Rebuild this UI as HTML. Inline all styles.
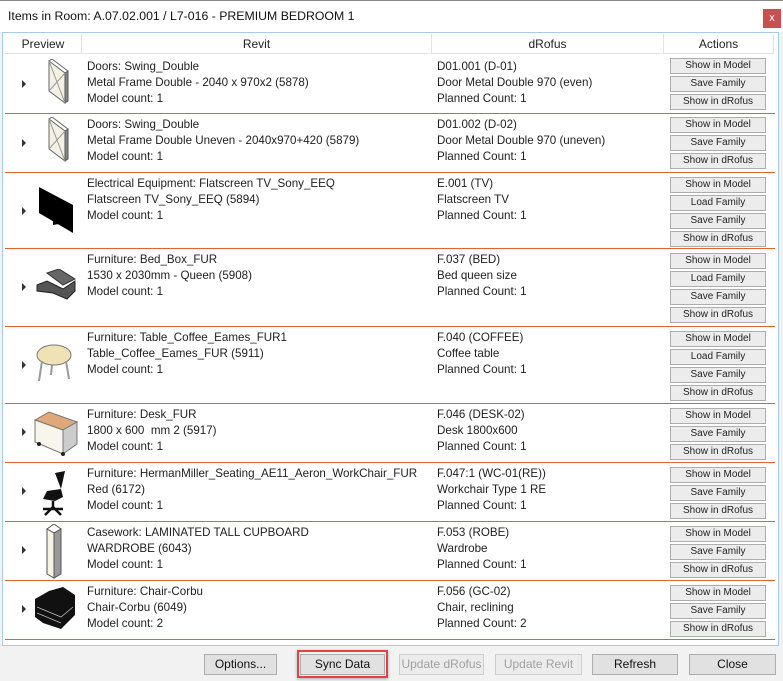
<!DOCTYPE html><html><head><meta charset="utf-8"><style>
*{margin:0;padding:0;box-sizing:border-box}
body{width:783px;height:681px;background:#f2f2f2;font-family:"Liberation Sans",sans-serif;font-size:11.6px;color:#1e1e1e;position:relative;overflow:hidden}
.top{position:absolute;left:0;top:0;width:783px;height:32px;background:#fff;border-top:1px solid #888}
.title{position:absolute;left:8px;top:8px;font-size:12.3px;color:#111}
.x{position:absolute;left:763px;top:8px;width:18px;height:19px;background:#c75050;color:#fff;font-size:11px;text-align:center;line-height:18px}
.box{position:absolute;left:2px;top:32px;width:777px;height:614px;background:#fff;border:1px solid #a9cbe8}
.hdr{position:absolute;top:34px;height:20px;background:#fff;border-right:1px solid #e2e2e2;border-bottom:1px solid #e2e2e2;text-align:center;line-height:20px;color:#222;font-size:12px}
.row{position:absolute;left:5px;width:770px;border-bottom:1px solid #e8602c}
.t{position:absolute;line-height:16px;white-space:nowrap}
.arr{position:absolute;left:17px;width:0;height:0;border-left:4px solid #333;border-top:4px solid transparent;border-bottom:4px solid transparent}
.b{position:absolute;left:665px;width:96px;height:16px;background:#ececec;border:1px solid #adadad;font-size:10px;text-align:center;line-height:14px;color:#222}
.ic{position:absolute;left:26px}
.bb{position:absolute;top:654px;height:21px;background:#e1e1e1;border:1px solid #adadad;text-align:center;line-height:19px;font-size:12px;color:#111}
.dis{color:#a0a0a0;background:#ececec;border-color:#cfcfcf}
</style></head><body>
<div class="top"><div class="title">Items in Room: A.07.02.001 / L7-016 - PREMIUM BEDROOM 1</div><div class="x">x</div></div>
<div class="box"></div>
<div class="hdr" style="left:5px;width:77px">Preview</div>
<div class="hdr" style="left:82px;width:350px">Revit</div>
<div class="hdr" style="left:432px;width:232px">dRofus</div>
<div class="hdr" style="left:664px;width:110px">Actions</div>

<!-- row1 -->
<div class="row" style="top:55px;height:59px">
<div class="arr" style="top:25px"></div>
<svg class="ic" style="top:4px" width="40" height="46"><path d="M18 2 L34 14 L34 44 L18 32Z" fill="#f3f1e4" stroke="#666"/><path d="M34 14 L37 12 L37 42 L34 44Z" fill="#888" stroke="#555"/><path d="M18 2 L21 0 L37 12" fill="none" stroke="#666"/><path d="M18 2 L34 44 M34 14 L18 32" stroke="#999" fill="none"/></svg>
<div class="t" style="left:82px;top:4px">Doors: Swing_Double<br>Metal Frame Double - 2040 x 970x2 (5878)<br>Model count: 1</div>
<div class="t" style="left:432px;top:4px">D01.001 (D-01)<br>Door Metal Double 970 (even)<br>Planned Count: 1</div>
<div class="b" style="top:3px">Show in Model</div><div class="b" style="top:21px">Save Family</div><div class="b" style="top:39px">Show in dRofus</div>
</div>
<!-- row2 -->
<div class="row" style="top:114px;height:59px">
<div class="arr" style="top:25px"></div>
<svg class="ic" style="top:3px" width="40" height="46"><path d="M18 2 L34 14 L34 44 L18 32Z" fill="#f3f1e4" stroke="#666"/><path d="M34 14 L37 12 L37 42 L34 44Z" fill="#888" stroke="#555"/><path d="M18 2 L21 0 L37 12" fill="none" stroke="#666"/><path d="M18 2 L34 44 M34 14 L18 32" stroke="#999" fill="none"/></svg>
<div class="t" style="left:82px;top:3px">Doors: Swing_Double<br>Metal Frame Double Uneven - 2040x970+420 (5879)<br>Model count: 1</div>
<div class="t" style="left:432px;top:3px">D01.002 (D-02)<br>Door Metal Double 970 (uneven)<br>Planned Count: 1</div>
<div class="b" style="top:3px">Show in Model</div><div class="b" style="top:21px">Save Family</div><div class="b" style="top:39px">Show in dRofus</div>
</div>
<!-- row3 -->
<div class="row" style="top:173px;height:76px">
<div class="arr" style="top:34px"></div>
<svg class="ic" style="top:12px" width="44" height="48"><path d="M8 2 L42 20 L42 48 L8 28Z" fill="#000"/><path d="M22 32 L34 38 L22 40Z" fill="#000"/></svg>
<div class="t" style="left:82px;top:3px">Electrical Equipment: Flatscreen TV_Sony_EEQ<br>Flatscreen TV_Sony_EEQ (5894)<br>Model count: 1</div>
<div class="t" style="left:432px;top:3px">E.001 (TV)<br>Flatscreen TV<br>Planned Count: 1</div>
<div class="b" style="top:4px">Show in Model</div><div class="b" style="top:22px">Load Family</div><div class="b" style="top:40px">Save Family</div><div class="b" style="top:58px">Show in dRofus</div>
</div>
<!-- row4 -->
<div class="row" style="top:249px;height:78px">
<div class="arr" style="top:34px"></div>
<svg class="ic" style="top:20px" width="46" height="32"><path d="M16 4 L28 0 L44 10 L32 16Z" fill="#666" stroke="#333"/><path d="M6 16 L16 12 L32 20 L44 12 L44 22 L36 30 L22 24 L6 22Z" fill="#555" stroke="#222"/></svg>
<div class="t" style="left:82px;top:3px">Furniture: Bed_Box_FUR<br>1530 x 2030mm - Queen (5908)<br>Model count: 1</div>
<div class="t" style="left:432px;top:3px">F.037 (BED)<br>Bed queen size<br>Planned Count: 1</div>
<div class="b" style="top:4px">Show in Model</div><div class="b" style="top:22px">Load Family</div><div class="b" style="top:40px">Save Family</div><div class="b" style="top:58px">Show in dRofus</div>
</div>
<!-- row5 -->
<div class="row" style="top:327px;height:77px">
<div class="arr" style="top:34px"></div>
<svg class="ic" style="top:16px" width="44" height="42"><ellipse cx="23" cy="12" rx="17" ry="10" fill="#efe3b5" stroke="#777"/><path d="M11 18 L8 38 M35 18 L38 36 M21 22 L20 32" stroke="#999" stroke-width="2"/></svg>
<div class="t" style="left:82px;top:3px">Furniture: Table_Coffee_Eames_FUR1<br>Table_Coffee_Eames_FUR (5911)<br>Model count: 1</div>
<div class="t" style="left:432px;top:3px">F.040 (COFFEE)<br>Coffee table<br>Planned Count: 1</div>
<div class="b" style="top:4px">Show in Model</div><div class="b" style="top:22px">Load Family</div><div class="b" style="top:40px">Save Family</div><div class="b" style="top:58px">Show in dRofus</div>
</div>
<!-- row6 -->
<div class="row" style="top:404px;height:59px">
<div class="arr" style="top:24px"></div>
<svg class="ic" style="top:4px" width="48" height="50"><path d="M4 12 L18 4 L46 14 L32 22Z" fill="#e0a878" stroke="#777"/><path d="M4 12 L32 22 L32 46 L4 34Z" fill="#f8f6ec" stroke="#777"/><path d="M32 22 L46 14 L46 36 L32 46Z" fill="#ccc" stroke="#777"/><circle cx="8" cy="36" r="2" fill="#222"/><circle cx="32" cy="46" r="2" fill="#222"/></svg>
<div class="t" style="left:82px;top:3px">Furniture: Desk_FUR<br>1800 x 600&nbsp; mm 2 (5917)<br>Model count: 1</div>
<div class="t" style="left:432px;top:3px">F.046 (DESK-02)<br>Desk 1800x600<br>Planned Count: 1</div>
<div class="b" style="top:4px">Show in Model</div><div class="b" style="top:22px">Save Family</div><div class="b" style="top:40px">Show in dRofus</div>
</div>
<!-- row7 -->
<div class="row" style="top:463px;height:59px">
<div class="arr" style="top:24px"></div>
<svg class="ic" style="top:8px" width="46" height="46"><path d="M24 2 L34 0 L30 18 L16 20 L12 28 L24 30 L32 26 L30 18Z" fill="#111"/><path d="M22 30 L22 36 M12 38 L32 38 M22 36 L14 44 M22 36 L30 44" stroke="#111" stroke-width="2.5"/></svg>
<div class="t" style="left:82px;top:3px">Furniture: HermanMiller_Seating_AE11_Aeron_WorkChair_FUR<br>Red (6172)<br>Model count: 1</div>
<div class="t" style="left:432px;top:3px">F.047:1 (WC-01(RE))<br>Workchair Type 1 RE<br>Planned Count: 1</div>
<div class="b" style="top:4px">Show in Model</div><div class="b" style="top:22px">Save Family</div><div class="b" style="top:40px">Show in dRofus</div>
</div>
<!-- row8 -->
<div class="row" style="top:522px;height:59px">
<div class="arr" style="top:24px"></div>
<svg class="ic" style="top:2px" width="46" height="56"><path d="M16 5 L23 0 L30 5 L23 9Z" fill="#fff" stroke="#555"/><path d="M16 5 L23 9 L23 54 L16 50Z" fill="#f7f4e6" stroke="#555"/><path d="M23 9 L30 5 L30 50 L23 54Z" fill="#999" stroke="#555"/></svg>
<div class="t" style="left:82px;top:3px">Casework: LAMINATED TALL CUPBOARD<br>WARDROBE (6043)<br>Model count: 1</div>
<div class="t" style="left:432px;top:3px">F.053 (ROBE)<br>Wardrobe<br>Planned Count: 1</div>
<div class="b" style="top:4px">Show in Model</div><div class="b" style="top:22px">Save Family</div><div class="b" style="top:40px">Show in dRofus</div>
</div>
<!-- row9 -->
<div class="row" style="top:581px;height:59px">
<div class="arr" style="top:24px"></div>
<svg class="ic" style="top:4px" width="46" height="50"><path d="M4 14 L18 6 L32 2 L44 10 L44 30 L30 44 L12 38 L4 32Z" fill="#111"/><path d="M6 22 L30 32 L42 22 M6 28 L30 38" stroke="#bbb" stroke-width="0.8" fill="none"/></svg>
<div class="t" style="left:82px;top:3px">Furniture: Chair-Corbu<br>Chair-Corbu (6049)<br>Model count: 2</div>
<div class="t" style="left:432px;top:3px">F.056 (GC-02)<br>Chair, reclining<br>Planned Count: 2</div>
<div class="b" style="top:4px">Show in Model</div><div class="b" style="top:22px">Save Family</div><div class="b" style="top:40px">Show in dRofus</div>
</div>

<div class="bb" style="left:204px;width:73px">Options...</div>
<div style="position:absolute;left:297px;top:650px;width:91px;height:28px;border:2px solid #e84040;box-shadow:0 1px 3px rgba(0,0,0,.3)"></div>
<div class="bb" style="left:300px;width:85px">Sync Data</div>
<div class="bb dis" style="left:399px;width:85px">Update dRofus</div>
<div class="bb dis" style="left:495px;width:87px">Update Revit</div>
<div class="bb" style="left:592px;width:86px">Refresh</div>
<div class="bb" style="left:689px;width:87px">Close</div>
</body></html>
